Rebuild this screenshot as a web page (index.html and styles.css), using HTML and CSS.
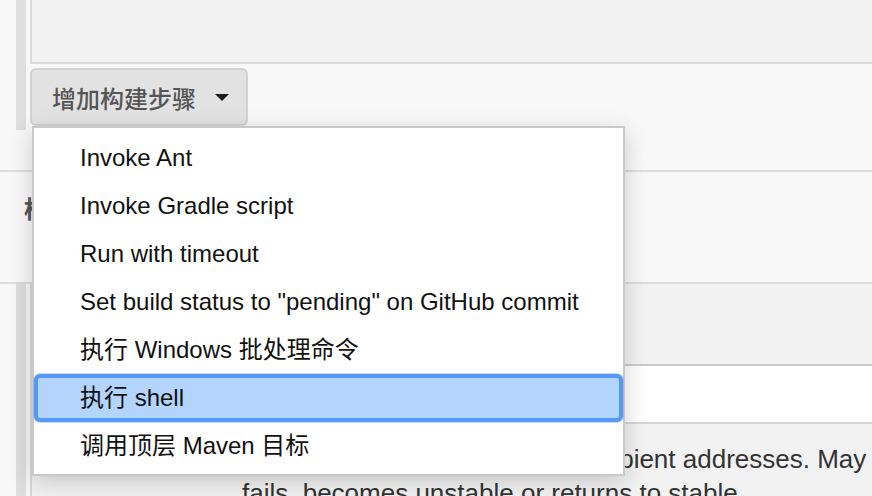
FILE: index.html
```html
<!DOCTYPE html>
<html lang="zh-CN">
<head>
<meta charset="utf-8">
<title>增加构建步骤</title>
<link rel="stylesheet" href="styles.css">
</head>
<body>
<div class="page">
  <section class="build-section">
    <div class="side-bar short"></div>
    <div class="section-body">
      <div class="step-box"></div>
      <button class="add-step" type="button">增加构建步骤 <span class="caret"></span></button>
    </div>
  </section>

  <section class="post-header">
    <h2 class="post-title">构建后操作</h2>
  </section>

  <section class="post-section">
    <div class="side-bar"></div>
    <div class="section-body framed">
      <div class="post-box"></div>
      <div class="input-row"></div>
      <div class="help">
        <div class="help-line">Whitespace-separated list of recipient addresses. May</div>
        <div class="help-line">fails, becomes unstable or returns to stable.</div>
      </div>
    </div>
  </section>

  <ul class="menu">
    <li class="menu-item">Invoke Ant</li>
    <li class="menu-item">Invoke Gradle script</li>
    <li class="menu-item">Run with timeout</li>
    <li class="menu-item">Set build status to "pending" on GitHub commit</li>
    <li class="menu-item">执行 Windows 批处理命令</li>
    <li class="menu-item active">执行 shell</li>
    <li class="menu-item">调用顶层 Maven 目标</li>
  </ul>
</div>
</body>
</html>
```

FILE: styles.css
```css
* { box-sizing: border-box; }

html, body {
  margin: 0;
  padding: 0;
  background: #f8f8f8;
  font-family: "Liberation Sans", "Noto Sans CJK SC", sans-serif;
  overflow: hidden;
}

.page {
  position: relative;
  width: 872px;
  height: 496px;
  overflow: hidden;
}

/* ---------- build section ---------- */
.build-section {
  display: flex;
  height: 172px;
  border-bottom: 2px solid #dcdcdc;
}

.side-bar {
  flex: 0 0 10px;
  margin-left: 16px;
  margin-right: 4px;
  background: #dedede;
}

.side-bar.short {
  height: 130px;
}

.section-body {
  flex: 1;
  display: flex;
  flex-direction: column;
  align-items: flex-start;
}

.step-box {
  width: 100%;
  height: 64px;
  background: #f2f2f2;
  border-left: 2px solid #d9d9d9;
  border-bottom: 2px solid #d9d9d9;
}

.add-step {
  margin-top: 4px;
  width: 218px;
  height: 58px;
  padding: 0 0 0 20px;
  display: flex;
  align-items: center;
  background: #e2e2e2;
  border: 2px solid #d2d2d2;
  border-radius: 6px;
  color: #555;
  font-family: "Noto Sans CJK SC", "Liberation Sans", sans-serif;
  font-size: 24px;
  font-weight: 500;
  letter-spacing: 0;
}

.caret {
  display: inline-block;
  margin-left: 19px;
  width: 0;
  height: 0;
  border-left: 7px solid transparent;
  border-right: 7px solid transparent;
  border-top: 7px solid #1a1a1a;
}

/* ---------- post build header ---------- */
.post-header {
  height: 112px;
  border-bottom: 2px solid #dcdcdc;
  padding: 20px 0 0 24px;
}

.post-title {
  margin: 0;
  font-family: "Noto Sans CJK SC", "Liberation Sans", sans-serif;
  font-size: 24px;
  line-height: 32px;
  font-weight: 700;
  color: #555;
}

/* ---------- post build section ---------- */
.post-section {
  display: flex;
  height: 300px;
}

.section-body.framed {
  border-left: 2px solid #d9d9d9;
  align-items: stretch;
}

.post-box {
  height: 82px;
  background: #f2f2f2;
  border-bottom: 2px solid #cccccc;
}

.input-row {
  height: 58px;
  background: #ffffff;
  border-bottom: 2px solid #d6d6d6;
}

.help {
  flex: 1;
  background: #f2f2f2;
  padding: 18px 0 0 210px;
  color: #333;
  font-size: 26px;
  line-height: 34px;
}

.help-line {
  white-space: nowrap;
}

/* ---------- dropdown menu ---------- */
.menu {
  position: absolute;
  left: 32px;
  top: 126px;
  width: 593px;
  height: 350px;
  margin: 0;
  padding: 6px 0 4px;
  list-style: none;
  background: #ffffff;
  border: 2px solid #c9c9c9;
  box-shadow: 0 6px 22px rgba(0, 0, 0, 0.18);
}

.menu-item {
  height: 48px;
  line-height: 48px;
  padding-left: 46px;
  font-size: 24px;
  color: #111;
  white-space: nowrap;
}

.menu-item.active {
  background: #b3d4fc;
  border: 4px solid #5598f6;
  border-radius: 6px;
  line-height: 40px;
  padding-left: 42px;
  box-shadow: 0 0 0 1px rgba(85, 152, 246, 0.35);
}
```
